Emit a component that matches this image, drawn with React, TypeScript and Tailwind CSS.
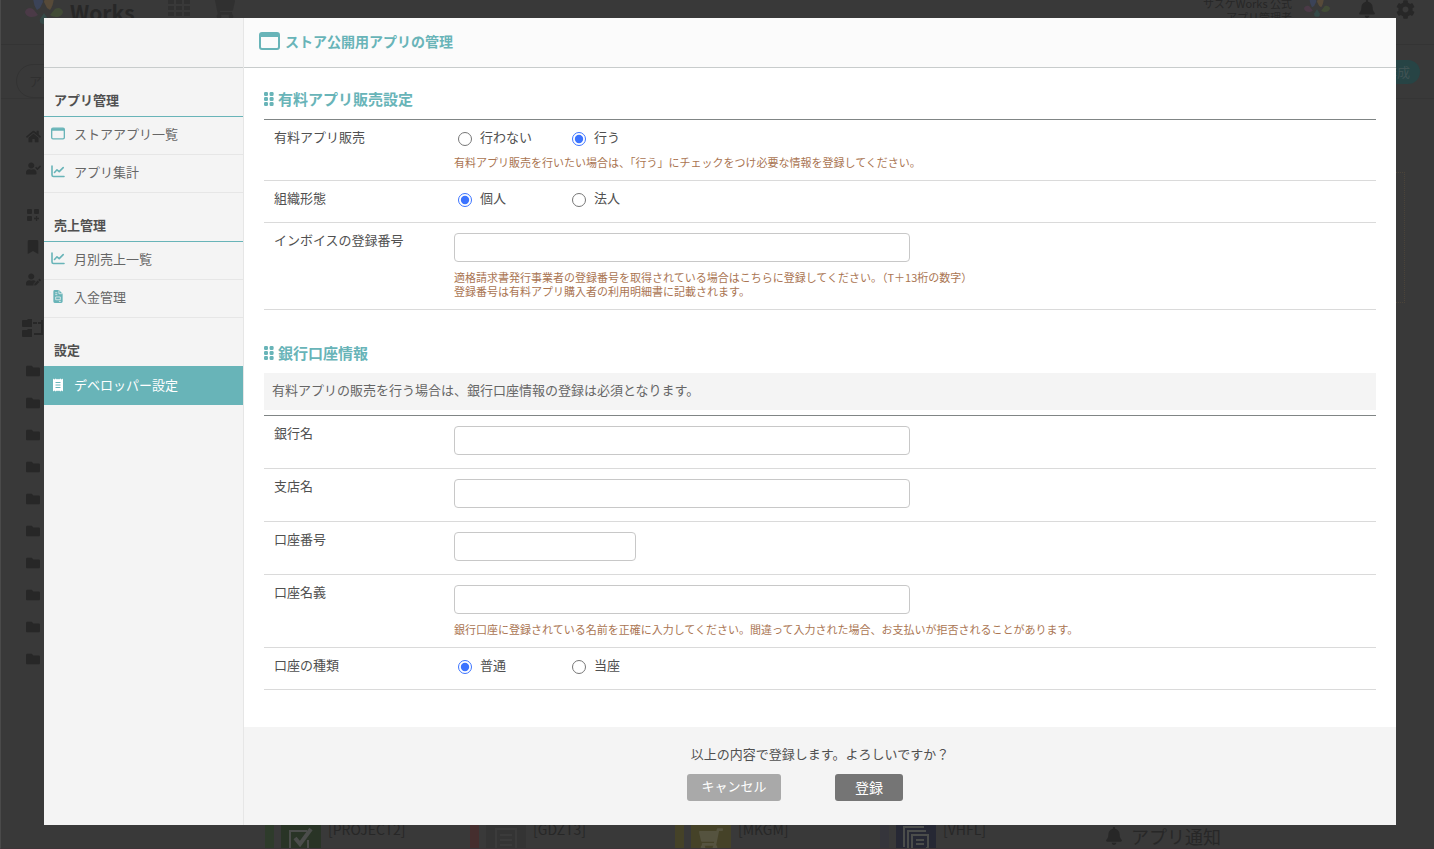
import { useState, type ReactNode } from "react"
import {
  FaBell,
  FaBookmark,
  FaCog,
  FaFolder,
  FaHome,
  FaShoppingCart,
  FaUserCheck,
  FaUserEdit,
} from "react-icons/fa"

type IconProps = { className?: string }

function WindowIcon({ className }: IconProps) {
  return (
    <svg className={className} viewBox="0 0 21 18" fill="none" aria-hidden="true">
      <rect x="1" y="1" width="19" height="16" rx="2" stroke="currentColor" strokeWidth="2" />
      <path d="M1 5V2.500A1.700 1.700 0 0 1 2.700 1h15.600A1.700 1.700 0 0 1 20 2.500V5z" fill="currentColor" />
    </svg>
  )
}

function ChartIcon({ className }: IconProps) {
  return (
    <svg className={className} viewBox="0 0 14 13" fill="none" stroke="currentColor" strokeLinecap="round" aria-hidden="true">
      <path d="M1 1v9a1.500 1.500 0 0 0 1.500 1.500H13" strokeWidth="1.600" />
      <path d="M3.500 7.500 6 4.800l2.200 1.800L12.200 2.600" strokeWidth="1.600" strokeLinejoin="round" />
    </svg>
  )
}

function InvoiceIcon({ className }: IconProps) {
  return (
    <svg className={className} viewBox="0 0 14 14" aria-hidden="true">
      <path d="M3.500 0H8l4 4v8.500a1.500 1.500 0 0 1-1.500 1.500h-7A1.500 1.500 0 0 1 2 12.500v-11A1.500 1.500 0 0 1 3.500 0z" fill="currentColor" />
      <path d="M8 .3V4h3.700M4 3h2.300M4 5h2.300M4.500 7.500h5v3h-5zM8 12.300h2" fill="none" stroke="#f4f4f4" strokeWidth=".8" />
    </svg>
  )
}

function ReceiptIcon({ className }: IconProps) {
  return (
    <svg className={className} viewBox="0 0 14 14" aria-hidden="true">
      <path d="M2 .5l1.300 1L4.700.5 6 1.500 7 .7l1 .8L9.300.5l1.400 1 1.300-1v13l-1.300-1-1.400 1-1.300-1-1 .8-1-.8-1.300 1-1.400-1-1.300 1z" fill="currentColor" />
      <path d="M4.500 4.500h5M4.500 7h5M4.500 9.500h5" stroke="#68b4b8" strokeWidth="1" />
    </svg>
  )
}

function DotsIcon({ className }: IconProps) {
  return (
    <svg className={className} viewBox="0 0 10 14" fill="currentColor" aria-hidden="true">
      {[0, 5, 10].map((y) => (
        <g key={y}>
          <rect x="0" y={y} width="4" height="4" rx="1.2" />
          <rect x="5.600" y={y} width="4" height="4" rx="1.2" />
        </g>
      ))}
    </svg>
  )
}

function GridIcon({ className }: IconProps) {
  return (
    <svg className={className} viewBox="0 0 24 24" fill="currentColor" aria-hidden="true">
      {[0, 6, 12, 18].map((y) => (
        <path key={y} d={`M1 ${y}h6v4H1zM9 ${y}h6v4H9zM17 ${y}h6v4h-6z`} />
      ))}
    </svg>
  )
}

function TilesPlusIcon({ className }: IconProps) {
  return (
    <svg className={className} viewBox="0 0 14 14" fill="currentColor" aria-hidden="true">
      <rect x="1" y="1" width="5" height="5" rx="1" />
      <rect x="8" y="1" width="5" height="5" rx="1" />
      <rect x="1" y="8" width="5" height="5" rx="1" />
      <path d="M10.500 8v5M8 10.500h5" stroke="currentColor" strokeWidth="1.300" />
    </svg>
  )
}

function FolderBranchIcon({ className }: IconProps) {
  return (
    <svg className={className} viewBox="0 0 22 18" fill="currentColor" aria-hidden="true">
      <path d="M1 1h4l1-1h4v8H1a1 1 0 0 1-1-1V2a1 1 0 0 1 1-1zM1 11h4l1-1h4v8H1a1 1 0 0 1-1-1v-5a1 1 0 0 1 1-1z" />
      <path d="M11 4h4M20 1v14h-8M16 4h4" fill="none" stroke="currentColor" strokeWidth="2" />
    </svg>
  )
}

function PetalLogo({ className }: IconProps) {
  return (
    <svg className={className} viewBox="0 0 38 36" aria-hidden="true">
      <path d="M8 6h9l1 8-3 6-3 2c-3-4-4-9-4-16z" fill="#3b4358" />
      <path d="M21 6h8c0 7-1 12-4 16l-3-2-3-6z" fill="#574a39" />
      <path d="M0 24c1-5 7-5 9-2l4 5c-4 3-12 3-13-3z" fill="#4b3a47" />
      <path d="M38 24c-1-5-7-5-9-2l-4 5c4 3 12 3 13-3z" fill="#414b36" />
      <path d="M19 25l4 6c1 3-1 5-4 5s-5-2-4-5z" fill="#354a48" />
    </svg>
  )
}

const apps = [
  { code: "[PROJECT2]", bar: "bg-[#2e3b2b]", tile: "bg-[#293426]", icon: "check" },
  { code: "[GDZT3]", bar: "bg-[#452e2e]", tile: "bg-[#343434]", icon: "list" },
  { code: "[MKGM]", bar: "bg-[#454228]", tile: "bg-[#454228]", icon: "cart" },
  { code: "[VHFL]", bar: "bg-[#35353b]", tile: "bg-[#262834]", icon: "docs" },
]

function TileIcon({ icon }: { icon: string }) {
  if (icon === "cart") return <FaShoppingCart className="size-6 -scale-x-100 text-[#55533f]" />
  return (
    <svg className="size-7" viewBox="0 0 28 28" fill="none" stroke="#4b4d4b" strokeWidth="2" aria-hidden="true">
      {icon === "check" && (
        <>
          <path d="M20 6H3v18h18v-9" />
          <path d="M8 13l5 6L24 4" strokeWidth="4" />
        </>
      )}
      {icon === "list" && <path d="M4 4h20v24H4zM8 10h12M8 15h12M8 20h12" stroke="#3b3b3b" />}
      {icon === "docs" && <path d="M2 22V2h20M6 25V6h18M10 10h16v12l-5 5H10zM14 15h8M14 19h8" />}
    </svg>
  )
}

// Page behind the dialog, already dimmed
function Backdrop() {
  return (
    <div className="flex h-screen flex-col overflow-hidden border-b border-l border-b-[#3d3438] border-l-[#4a4a4a] bg-[#393939] text-[#272727]" aria-hidden="true">
      <div className="flex h-[45px] shrink-0 items-start border-b border-[#343434] pr-[19px] pl-6">
        <PetalLogo className="-mt-3 h-9 w-[38px]" />
        <span className="ml-[7px] text-[21px] leading-6 font-bold">Works</span>
        <GridIcon className="-mt-1.5 ml-8 size-6 text-[#303030]" />
        <FaShoppingCart className="-mt-1 ml-5 size-6 text-[#303030]" />
        <div className="-mt-1 ml-auto text-right text-[11px] leading-[14px]">
          <p>サスケWorks 公式</p>
          <p>アプリ管理者</p>
        </div>
        <PetalLogo className="-mt-2 ml-3 h-[25px] w-[26px]" />
        <FaBell className="ml-7 size-[18px]" />
        <FaCog className="ml-5 size-[19px]" />
      </div>
      <div className="flex h-[54px] shrink-0 items-center justify-between border-b border-[#353535] pr-[14px] pl-[15px]">
        <div className="mt-[19px] h-[34px] w-[180px] rounded-full border border-[#333] px-3 text-[13px] leading-8 text-[#303030]">アプリ検索</div>
        <div className="h-6 rounded-full bg-[#274445] px-[10px] text-[13px] leading-6 text-[#405354]">新規作成</div>
      </div>
      <div className="flex min-h-0 flex-1">
        <div className="flex w-16 shrink-0 flex-col items-center pt-[30px]">
          <FaHome className="size-[15px] shrink-0" />
          <FaUserCheck className="mt-[17px] size-[15px] shrink-0" />
          <TilesPlusIcon className="mt-8 size-[14px] shrink-0" />
          <FaBookmark className="mt-[18px] size-[14px] shrink-0" />
          <FaUserEdit className="mt-[18px] size-[15px] shrink-0" />
          <FolderBranchIcon className="mt-8 h-[18px] w-[22px] shrink-0" />
          <div className="mt-[27px] flex flex-col gap-[18px]">
            {Array.from({ length: 10 }).map((_, i) => (
              <FaFolder key={i} className="size-[14px]" />
            ))}
          </div>
        </div>
        <div className="flex min-w-0 flex-1 flex-col justify-between pt-[73px]">
          <div className="mr-[29px] h-[131px] border border-dotted border-[#4b443a]" />
          <div className="flex h-[29px] pl-[200px]">
            {apps.map((app) => (
              <div key={app.code} className="flex w-[205px] shrink-0 items-start gap-[7px]">
                <div className={`h-10 w-[9px] ${app.bar}`} />
                <div className={`flex h-10 w-10 items-center justify-center ${app.tile}`}>
                  <TileIcon icon={app.icon} />
                </div>
                <p className="text-sm leading-5">{app.code}</p>
              </div>
            ))}
            <div className="ml-5 flex items-center gap-2 pt-1 text-lg leading-5">
              <FaBell className="size-[18px]" />
              アプリ通知
            </div>
          </div>
        </div>
      </div>
    </div>
  )
}

const menu = [
  {
    title: "アプリ管理",
    items: [
      { label: "ストアアプリ一覧", icon: WindowIcon },
      { label: "アプリ集計", icon: ChartIcon },
    ],
  },
  {
    title: "売上管理",
    items: [
      { label: "月別売上一覧", icon: ChartIcon },
      { label: "入金管理", icon: InvoiceIcon },
    ],
  },
  {
    title: "設定",
    items: [{ label: "デベロッパー設定", icon: ReceiptIcon, active: true }],
  },
]

function Sidebar() {
  return (
    <aside className="w-[200px] shrink-0 border-r border-[#e6e6e6] bg-[#f4f4f4]">
      <div className="h-[50px] border-b border-[#c8cccc]" />
      <nav>
        {menu.map((group) => (
          <section key={group.title}>
            <h2 className="border-b border-[#68b4b8] px-[10px] pt-[23px] pb-[7px] text-[13px] leading-[18px] font-bold text-[#505050]">
              {group.title}
            </h2>
            <ul>
              {group.items.map((item) => (
                <li key={item.label}>
                  <a
                    href="#"
                    className={
                      item.active
                        ? "flex h-[38px] items-center gap-[9px] bg-[#68b4b8] px-[7px] pb-[3px] text-[13px] text-white"
                        : "flex h-[38px] items-center gap-[9px] border-b border-[#e6e6e6] px-[7px] pb-1 text-[13px] text-[#666]"
                    }
                  >
                    <item.icon className={item.active ? "h-[14px] w-[14px]" : "h-[13px] w-[14px] text-[#68b4b8]"} />
                    {item.label}
                  </a>
                </li>
              ))}
            </ul>
          </section>
        ))}
      </nav>
    </aside>
  )
}

function SectionTitle({ children }: { children: ReactNode }) {
  return (
    <h2 className="flex items-center gap-1 text-[15px] leading-5 font-bold text-[#68b4b8]">
      <DotsIcon className="h-[14px] w-[10px]" />
      {children}
    </h2>
  )
}

function Row({ label, htmlFor, pad, children }: { label: string; htmlFor: string; pad: string; children: ReactNode }) {
  return (
    <div className="flex border-b border-[#dadada]">
      <label id={htmlFor + "-label"} htmlFor={htmlFor} className="w-[190px] shrink-0 pt-[9px] pl-[10px] text-[13px] leading-4 text-[#505050]">
        {label}
      </label>
      <div className={`min-w-0 flex-1 ${pad}`}>{children}</div>
    </div>
  )
}

function Hint({ children }: { children: ReactNode }) {
  return <p className="mt-2 text-[11px] leading-[14px] text-[#aa7552]">{children}</p>
}

function TextBox({ id, short }: { id: string; short?: boolean }) {
  return (
    <input
      id={id}
      type="text"
      className={`block h-[29px] rounded border border-[#c8c8c8] bg-white px-2 text-[13px] ${short ? "w-[182px]" : "w-[456px]"}`}
    />
  )
}

function Radios({ name, options, initial }: { name: string; options: string[]; initial: string }) {
  const [value, setValue] = useState(initial)
  return (
    <div className="flex pb-px" role="radiogroup" aria-labelledby={name + "-label"}>
      {options.map((option, i) => (
        <label key={option} className="flex w-[114px] items-start gap-2 pl-1 text-[13px] leading-4 text-[#505050]">
          <input
            id={i === 0 ? name : undefined}
            type="radio"
            name={name}
            checked={value === option}
            onChange={() => setValue(option)}
            className="mt-[3px] size-[14px] accent-[#3b73ff]"
          />
          {option}
        </label>
      ))}
    </div>
  )
}

export default function App() {
  return (
    <div className="font-['Noto_Sans_CJK_JP',sans-serif]" lang="ja">
      <Backdrop />
      <div className="fixed top-[18px] right-[38px] bottom-6 left-11 flex bg-white" role="dialog" aria-label="ストア公開用アプリの管理">
        <Sidebar />
        <main className="flex min-w-0 flex-1 flex-col overflow-auto">
          <header className="flex h-[50px] shrink-0 items-center gap-[5px] border-b border-[#c8cccc] bg-[#fbfbfb] px-[15px] pb-[3px]">
            <WindowIcon className="h-[18px] w-[21px] text-[#68b4b8]" />
            <h1 className="text-sm font-bold text-[#68b4b8]">ストア公開用アプリの管理</h1>
          </header>

          <form id="developer" className="px-5 pt-[21px]" onSubmit={(e) => e.preventDefault()}>
            <SectionTitle>有料アプリ販売設定</SectionTitle>
            <div className="mt-[10px] border-t border-[#808585]">
              <Row label="有料アプリ販売" htmlFor="paid" pad="pt-[9px] pb-[11px]">
                <Radios name="paid" options={["行わない", "行う"]} initial="行う" />
                <Hint>有料アプリ販売を行いたい場合は、「行う」にチェックをつけ必要な情報を登録してください。</Hint>
              </Row>
              <Row label="組織形態" htmlFor="organization" pad="pt-[9px] pb-[14px]">
                <Radios name="organization" options={["個人", "法人"]} initial="個人" />
              </Row>
              <Row label="インボイスの登録番号" htmlFor="invoice" pad="pt-[10px] pb-[11px]">
                <TextBox id="invoice" />
                <Hint>
                  適格請求書発行事業者の登録番号を取得されている場合はこちらに登録してください。（T＋13桁の数字）
                  <br />
                  登録番号は有料アプリ購入者の利用明細書に記載されます。
                </Hint>
              </Row>
            </div>

            <div className="mt-[33px]">
              <SectionTitle>銀行口座情報</SectionTitle>
            </div>
            <p className="mt-[10px] bg-[#f4f4f4] px-2 pt-2 pb-[11px] text-[13px] leading-[18px] text-[#666]">
              有料アプリの販売を行う場合は、銀行口座情報の登録は必須となります。
            </p>
            <div className="mt-[5px] border-t border-[#808585]">
              <Row label="銀行名" htmlFor="bank" pad="pt-[10px] pb-[13px]">
                <TextBox id="bank" />
              </Row>
              <Row label="支店名" htmlFor="branch" pad="pt-[10px] pb-[13px]">
                <TextBox id="branch" />
              </Row>
              <Row label="口座番号" htmlFor="number" pad="pt-[10px] pb-[13px]">
                <TextBox id="number" short />
              </Row>
              <Row label="口座名義" htmlFor="holder" pad="pt-[10px] pb-[11px]">
                <TextBox id="holder" />
                <Hint>銀行口座に登録されている名前を正確に入力してください。間違って入力された場合、お支払いが拒否されることがあります。</Hint>
              </Row>
              <Row label="口座の種類" htmlFor="kind" pad="pt-[9px] pb-[14px]">
                <Radios name="kind" options={["普通", "当座"]} initial="普通" />
              </Row>
            </div>
          </form>

          <footer className="mt-auto flex flex-col items-center bg-[#f4f4f4] pt-[18px] pb-6">
            <p className="text-[13px] leading-[18px] text-[#505050]">以上の内容で登録します。よろしいですか？</p>
            <div className="mt-[11px] flex items-start gap-[54px] pr-[50px]">
              <button type="button" className="h-[27px] w-[94px] rounded-[3px] bg-[#a9a9a9] pb-1 text-[13px] leading-none text-white">
                キャンセル
              </button>
              <button type="submit" form="developer" className="h-[27px] w-[68px] rounded-[3px] bg-[#757575] pb-[2px] text-sm leading-none text-white">
                登録
              </button>
            </div>
          </footer>
        </main>
      </div>
    </div>
  )
}
